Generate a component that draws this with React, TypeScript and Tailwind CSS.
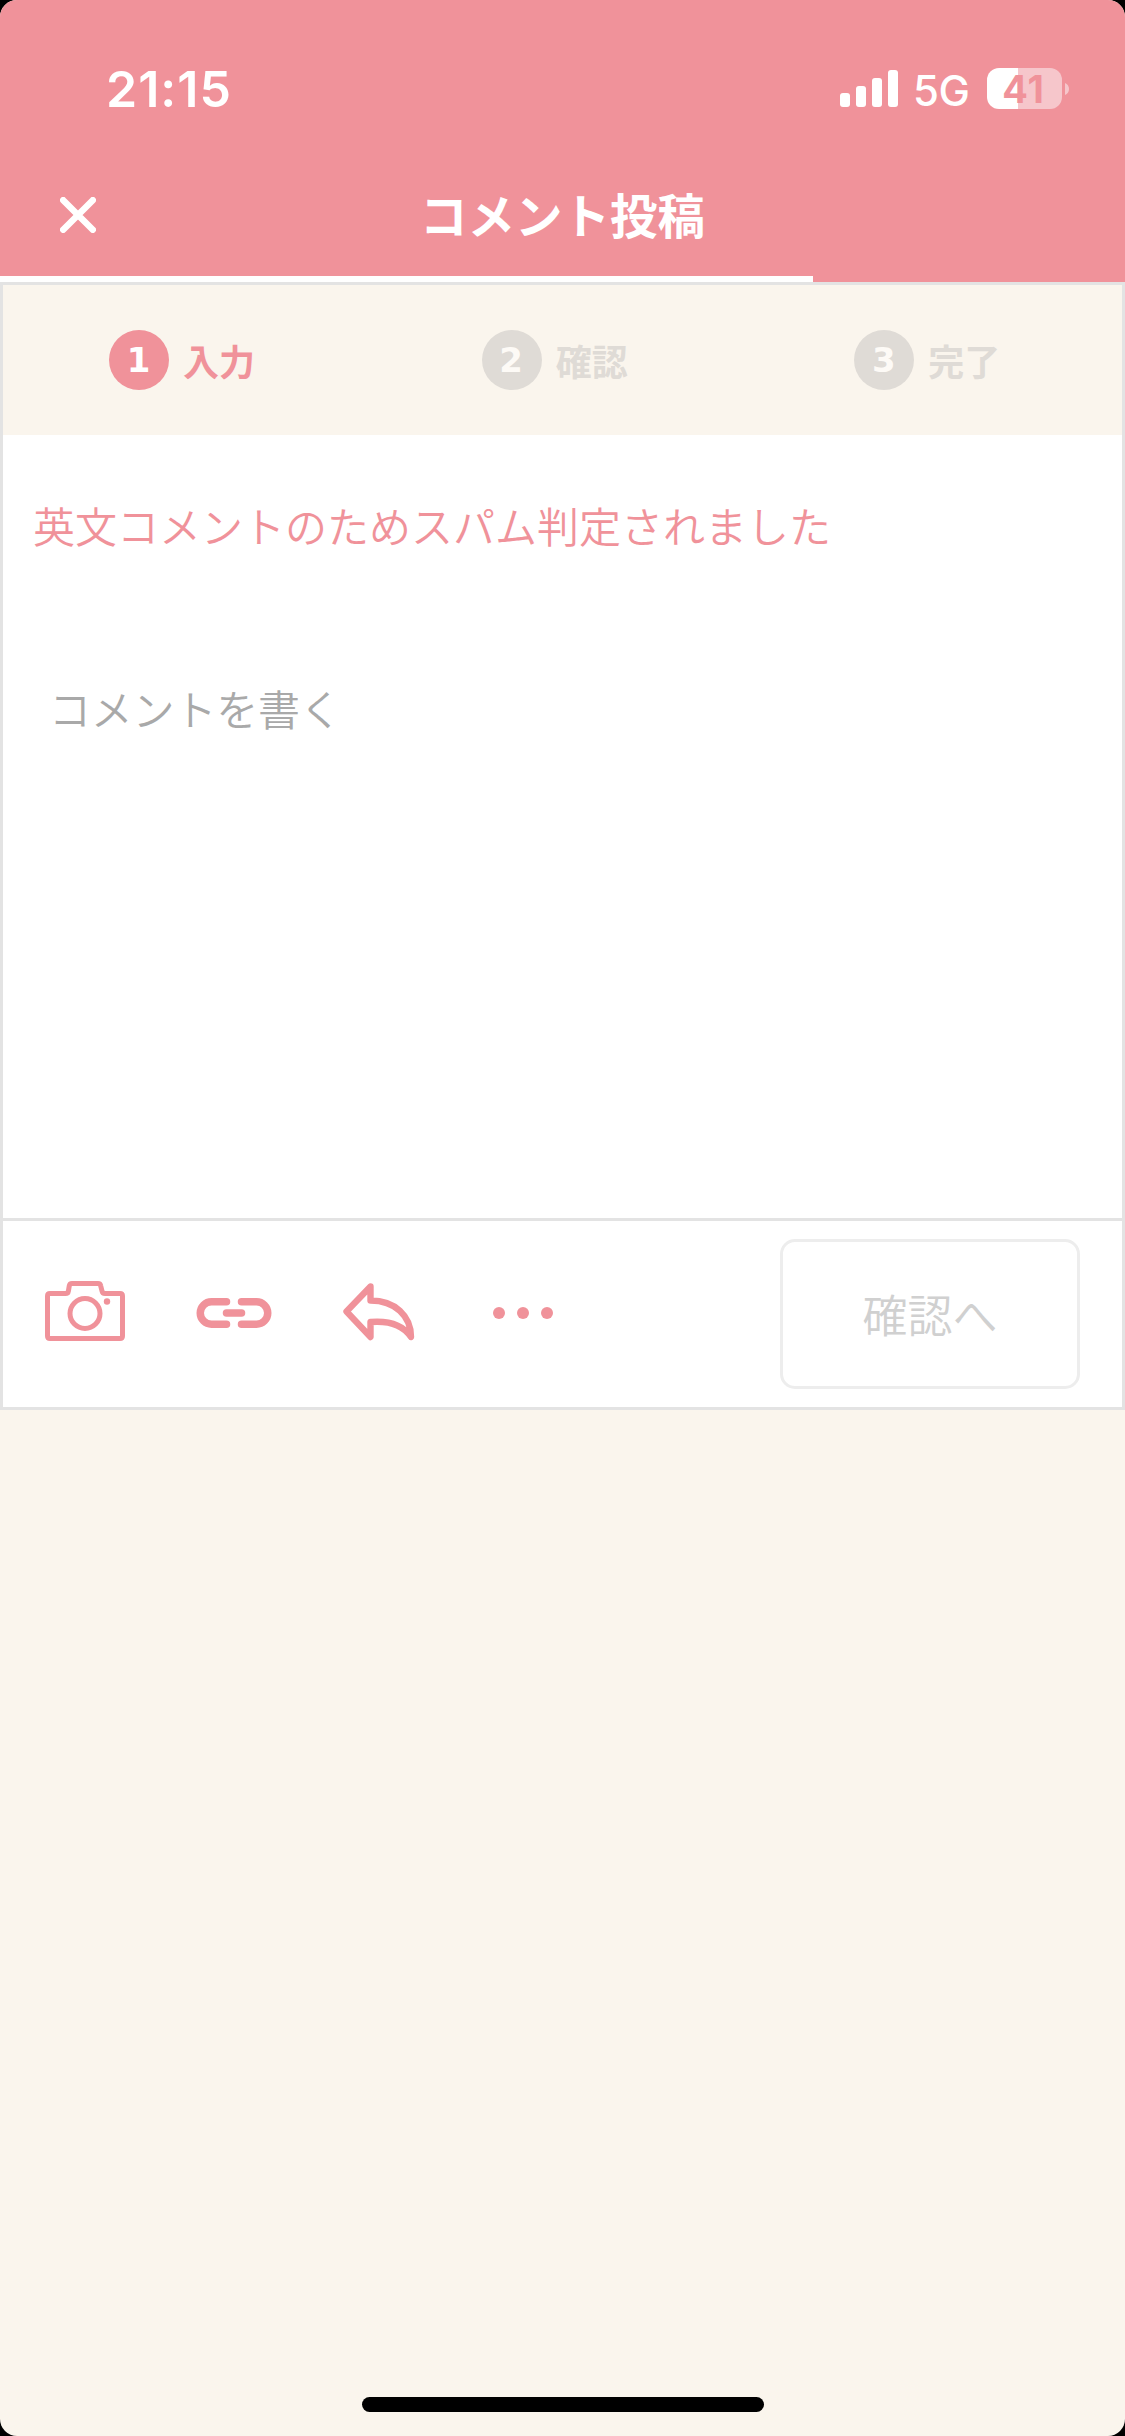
import { FC } from "react";
import clsx from "clsx";

const steps = [
  { no: 1, label: "入力", active: true },
  { no: 2, label: "確認", active: false },
  { no: 3, label: "完了", active: false },
];

const StatusBar: FC = () => {
  return (
    <div className="flex h-[156px] items-start justify-between pl-[106px] pr-14 pt-[59px] font-['Inter',sans-serif] text-white">
      <span className="text-[50px] font-semibold leading-[60px] tracking-[1px]">21:15</span>
      <div className="flex items-start pt-[9px]">
        {/* Signal */}
        <svg width="58" height="37" viewBox="0 0 58 37" fill="currentColor" className="mt-[2px]">
          <rect x="0" y="23" width="10" height="14" rx="3" />
          <rect x="16" y="16" width="10" height="21" rx="3" />
          <rect x="32" y="8" width="10" height="29" rx="3" />
          <rect x="48" y="0" width="10" height="37" rx="3" />
        </svg>
        <span className="ml-[15px] mt-px w-[57px] whitespace-nowrap text-[42px] font-medium leading-[44px] tracking-[-0.5px]">5G</span>
        {/* Battery */}
        <div className="ml-[17px] flex items-center">
          <div className="flex h-[41px] w-[75px] items-center justify-center rounded-xl bg-linear-to-r from-white from-[31px] to-[#f6c6cb] to-[31px] pr-[2px] text-[38px] font-bold leading-none tracking-[1px] text-[#f0929a]">
            41
          </div>
          <svg width="4" height="12" viewBox="0 0 4 12" fill="#f6c6cb" className="ml-[3px]">
            <path d="M0 0C2.5 1 4 3 4 6s-1.500 5-4 6z" />
          </svg>
        </div>
      </div>
    </div>
  );
};

const Header: FC = () => {
  return (
    <header className="h-[282px] bg-[#f0929a]">
      <StatusBar />
      <div className="grid h-[120px] grid-cols-3 items-center px-[60px] text-white">
        <button type="button" aria-label="閉じる" className="w-9 pb-[2px]">
          <svg width="36" height="36" viewBox="0 0 36 36" fill="none" stroke="currentColor" strokeWidth="6.500" strokeLinecap="round">
            <path d="M3.200 3.200l29.600 29.600M32.800 3.200L3.200 32.800" />
          </svg>
        </button>
        <h1 className="whitespace-nowrap pb-[4px] text-center text-[47.500px] font-bold leading-none">コメント投稿</h1>
      </div>
      <div className="h-[6px] w-[813px] bg-white" />
    </header>
  );
};

const Steps: FC = () => {
  return (
    <ol className="grid h-[150px] grid-cols-3 bg-[#faf5ed] pr-px">
      {steps.map((step) => (
        <li key={step.no} className="flex items-start gap-[14px] pl-[106px] pt-[45px]">
          <span
            className={clsx(
              "flex size-[60px] shrink-0 items-center justify-center rounded-full pr-px font-['DejaVu_Sans',sans-serif] text-[34px] font-bold leading-none",
              step.active ? "bg-[#f0929a] text-white" : "bg-[#dfdbd6] text-[#fdfaf6]"
            )}
          >
            {step.no}
          </span>
          <span
            className={clsx(
              "text-[36px] font-bold leading-[60px]",
              step.active ? "text-[#f0929a]" : "text-[#dfdbd6]"
            )}
          >
            {step.label}
          </span>
        </li>
      ))}
    </ol>
  );
};

const Toolbar: FC = () => {
  return (
    <div className="flex h-[189px] items-center border-t-[3px] border-[#e3e3e3] pl-[42px] pr-[42px] text-[#f0929a]">
      {/* Camera */}
      <svg width="80" height="60" viewBox="0 0 80 60" fill="none" stroke="currentColor" strokeWidth="5" strokeLinejoin="round" className="-mt-[6px]">
        <path d="M5 12.500H20.500Q23 12.500 23.400 10L24.300 4.800Q24.700 2.500 27 2.500H53Q55.300 2.500 55.700 4.800L57 10Q57.500 12.500 60 12.500H75Q77.500 12.500 77.500 15V55Q77.500 57.500 75 57.500H5Q2.500 57.500 2.500 55V15Q2.500 12.500 5 12.500Z" />
        <circle cx="40" cy="32.500" r="15" />
        <circle cx="62" cy="20.500" r="3.200" fill="currentColor" stroke="none" />
      </svg>
      {/* Link */}
      <svg width="76" height="30" viewBox="0 0 76 30" fill="none" stroke="currentColor" strokeWidth="7.500" strokeLinecap="round" className="-mt-[2px] ml-[71px]">
        <path d="M30.500 3.750H15.500a11.250 11.250 0 0 0 0 22.500H30.500" />
        <path d="M45.500 3.750H60.500a11.250 11.250 0 0 1 0 22.500H45.500" />
        <path d="M30.500 15H45.500" />
      </svg>
      {/* Reply */}
      <svg width="72" height="58" viewBox="0 0 72 58" fill="none" stroke="currentColor" strokeWidth="6.400" strokeLinecap="round" strokeLinejoin="round" className="-mt-[5px] ml-[71px]">
        <path d="M27.500 3.500L3.500 28.500L27.500 54V39C46 37.500 60 42 68 54C68 33 52 17.500 27.500 17.500Z" />
      </svg>
      {/* More */}
      <svg width="60" height="12" viewBox="0 0 60 12" fill="currentColor" className="-mt-[2px] ml-[78px]">
        <circle cx="6" cy="6" r="6" />
        <circle cx="30" cy="6" r="6" />
        <circle cx="54" cy="6" r="6" />
      </svg>
      <button
        type="button"
        disabled
        className="ml-auto h-[150px] w-[300px] rounded-[15px] border-[3px] border-[#ededed] pb-[2px] text-[45px] font-[350] leading-none text-[#d0d0d0]"
      >
        確認へ
      </button>
    </div>
  );
};

export default function App() {
  return (
    <div className="h-[2436px] w-[1125px] bg-black font-['Noto_Sans_CJK_JP',sans-serif]" lang="ja">
      <div className="flex h-full flex-col overflow-hidden rounded-[17px] bg-[#faf5ed]">
        <Header />
        <main className="flex h-[1128px] flex-col border-[3px] border-[#e3e3e3] bg-white">
          <Steps />
          <p className="pl-[30px] pt-[57px] text-[42px] font-[350] leading-[66px] text-[#f0929a]">
            英文コメントのためスパム判定されました
          </p>
          <textarea
            placeholder="コメントを書く"
            className="mt-[117px] w-full flex-1 resize-none pl-[46px] text-[42px] font-[350] leading-[66px] tracking-[-0.2px] outline-none placeholder:text-[#a9a9a9]"
          />
          <Toolbar />
        </main>
        {/* Home indicator */}
        <div className="mx-auto mb-[24px] mt-auto h-[15px] w-[402px] rounded-full bg-black" />
      </div>
    </div>
  );
}
